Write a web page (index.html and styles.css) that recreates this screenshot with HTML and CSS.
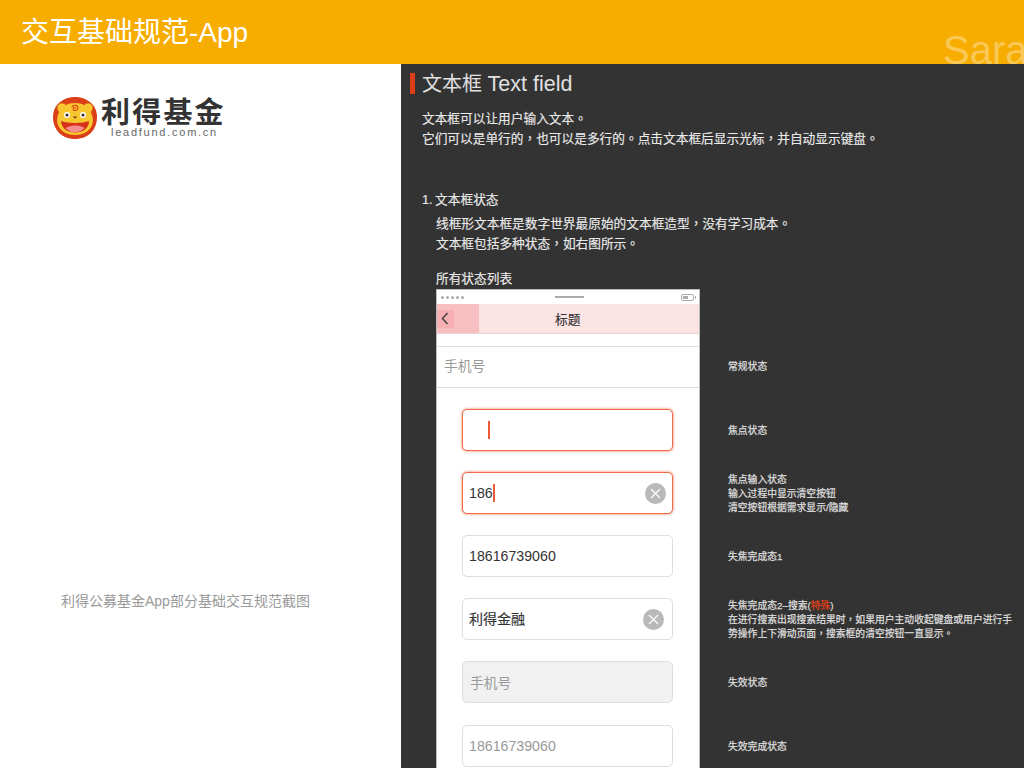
FILE: index.html
```html
<!DOCTYPE html>
<html lang="zh-CN">
<head>
<meta charset="utf-8">
<title>交互基础规范-App</title>
<link rel="stylesheet" href="styles.css">
</head>
<body>
<div class="page">
  <header class="topbar">
    <h1 class="topbar-title">交互基础规范-App</h1>
    <span class="watermark">Sara</span>
  </header>
  <div class="main">
    <aside class="side">
      <div class="logo">
        <svg class="logo-mark" width="44" height="42" viewBox="0 0 44 42">
          <path d="M22 0C33 0 44 7 44 20C44 33 35 42 22 42C9 42 0 33 0 20C0 7 11 0 22 0Z" fill="#DC3F17"/>
          <circle cx="9" cy="11" r="5" fill="#F8C62E" stroke="#C9541A" stroke-width=".8"/>
          <circle cx="35" cy="11" r="5" fill="#F8C62E" stroke="#C9541A" stroke-width=".8"/>
          <path d="M22 6C32 6 39 12 40 23C40 32 32 38 22 38C12 38 4 32 4 23C5 12 12 6 22 6Z" fill="#F8C62E"/>
          <path d="M19 10.500a3 2.600 0 1 1 3 3a1.600 1.500 0 1 1 1-2.500" fill="none" stroke="#DC3F17" stroke-width="1.100"/>
          <circle cx="14" cy="18" r="3" fill="#fff"/>
          <circle cx="30" cy="18" r="3" fill="#fff"/>
          <circle cx="14" cy="18" r="1.500" fill="#3A2A20"/>
          <circle cx="30" cy="18" r="1.500" fill="#3A2A20"/>
          <path d="M20 19.500h4l-2 2.300z" fill="#5A3418"/>
          <path d="M8 24C14 26.500 30 26.500 36 24C36 31 30 35.500 22 35.500C14 35.500 8.500 31 8 24Z" fill="#D8321C"/>
          <path d="M12.500 31C17 27.500 27 27.500 31.500 31C28.500 34.300 25 35.300 22 35.300C18.500 35.300 15.500 34.300 12.500 31Z" fill="#F58E8E"/>
        </svg>
        <div class="logo-text">
          <div class="logo-name">利得基金</div>
          <div class="logo-url">leadfund.com.cn</div>
        </div>
      </div>
      <p class="caption">利得公募基金App部分基础交互规范截图</p>
    </aside>
    <section class="content">
      <h2 class="section-title">文本框 <span class="title-latin">Text field</span></h2>
      <div class="intro">
        <p>文本框可以让用户输入文本<span class="pn" lang="zh-TW">。</span></p>
        <p>它们可以是单行的<span class="pn" lang="zh-TW">，</span>也可以是多行的<span class="pn" lang="zh-TW">。</span>点击文本框后显示光标<span class="pn" lang="zh-TW">，</span>并自动显示键盘<span class="pn" lang="zh-TW">。</span></p>
      </div>
      <h3 class="sub-title">1. 文本框状态</h3>
      <div class="sub-body">
        <p>线框形文本框是数字世界最原始的文本框造型<span class="pn" lang="zh-TW">，</span>没有学习成本<span class="pn" lang="zh-TW">。</span></p>
        <p>文本框包括多种状态<span class="pn" lang="zh-TW">，</span>如右图所示<span class="pn" lang="zh-TW">。</span></p>
      </div>
      <p class="list-label">所有状态列表</p>
      <div class="phone-head">
        <div class="status-bar">
          <span class="signal"><i></i><i></i><i></i><i></i><i></i></span>
          <span class="speaker"></span>
          <span class="battery"><i></i></span>
        </div>
        <div class="nav">
          <span class="back">
            <span class="back-icon">
              <svg width="8" height="13" viewBox="0 0 8 13"><path d="M6.500 1L1.500 6.500L6.500 12" fill="none" stroke="#444" stroke-width="1.500"/></svg>
            </span>
          </span>
          <span class="nav-title">标题</span>
        </div>
      </div>
      <div class="state state-first">
        <div class="cell">
          <div class="plain-field">手机号</div>
        </div>
        <div class="note">常规状态</div>
      </div>
      <div class="state">
        <div class="cell">
          <div class="field field-focus"><span class="caret caret-empty"></span></div>
        </div>
        <div class="note">焦点状态</div>
      </div>
      <div class="state">
        <div class="cell">
          <div class="field field-focus field-num">186<span class="caret"></span>
            <span class="clear clear-a"><svg width="11" height="11" viewBox="0 0 11 11"><path d="M1 1L10 10M10 1L1 10" stroke="#fff" stroke-width="1.200"/></svg></span>
          </div>
        </div>
        <div class="note">焦点输入状态<br>输入过程中显示清空按钮<br>清空按钮根据需求显示/隐藏</div>
      </div>
      <div class="state">
        <div class="cell">
          <div class="field field-num">18616739060</div>
        </div>
        <div class="note">失焦完成态1</div>
      </div>
      <div class="state">
        <div class="cell">
          <div class="field field-cjk">利得金融
            <span class="clear"><svg width="11" height="11" viewBox="0 0 11 11"><path d="M1 1L10 10M10 1L1 10" stroke="#fff" stroke-width="1.200"/></svg></span>
          </div>
        </div>
        <div class="note">失焦完成态2–搜索(<span class="special">特殊</span>)<br>在进行搜索出现搜索结果时<span class="pn" lang="zh-TW">，</span>如果用户主动收起键盘或用户进行手<br>势操作上下滑动页面<span class="pn" lang="zh-TW">，</span>搜索框的清空按钮一直显示<span class="pn" lang="zh-TW">。</span></div>
      </div>
      <div class="state state-tall">
        <div class="cell">
          <div class="field field-disabled">手机号</div>
        </div>
        <div class="note">失效状态</div>
      </div>
      <div class="state">
        <div class="cell">
          <div class="field field-num field-muted">18616739060</div>
        </div>
        <div class="note">失效完成状态</div>
      </div>
    </section>
  </div>
</div>
</body>
</html>
```
FILE: styles.css
```css
* { box-sizing: border-box; }
html, body { margin: 0; padding: 0; }
body {
  font-family: "Liberation Sans", "Noto Sans CJK SC", sans-serif;
  background: #fff;
}
h1, h2, h3, p { margin: 0; font-weight: 400; }
.page {
  width: 1024px;
  height: 768px;
  overflow: hidden;
}
.topbar {
  position: relative;
  height: 64px;
  background: #F7AD00;
  overflow: hidden;
  display: flex;
  align-items: center;
  padding: 1px 0 0 21px;
}
.topbar-title {
  font-size: 28px;
  color: #fff;
  line-height: 34px;
}
.watermark {
  position: absolute;
  left: 943px;
  top: 26px;
  font-size: 40px;
  line-height: 48px;
  color: #F9C857;
  white-space: nowrap;
}
.main {
  display: flex;
  height: 704px;
}
.side {
  width: 401px;
  flex: none;
  background: #fff;
  padding: 33px 0 0 53px;
}
.logo {
  display: flex;
  align-items: flex-start;
  gap: 4px;
  height: 42px;
}
.logo-name {
  font-size: 29px;
  line-height: 26px;
  letter-spacing: 2.200px;
  font-weight: 700;
  color: #333;
  margin-top: 3px;
}
.logo-url {
  font-size: 11px;
  line-height: 12px;
  letter-spacing: 1.750px;
  color: #666;
  padding-left: 10px;
}
.caption {
  margin: 453px 0 0 8px;
  font-size: 14px;
  line-height: 18px;
  color: #999;
  white-space: nowrap;
}
.content {
  flex: 1;
  background: #333;
  color: #EAEAEA;
  padding: 9px 0 0 9px;
  overflow: hidden;
}
.section-title {
  border-left: 5px solid #DC3F17;
  padding-left: 7px;
  font-size: 20px;
  line-height: 23px;
  height: 21px;
  color: #E0E0E0;
}
.title-latin { font-size: 21.500px; }
.intro {
  margin: 15px 0 0 12px;
  font-size: 12.700px;
  line-height: 20px;
  white-space: nowrap;
  -webkit-text-stroke: .15px #EAEAEA;
}
.intro p, .sub-body p { height: 20px; }
.pn {
  font-family: "Noto Sans CJK TC", sans-serif;
  line-height: 0;
}
.sub-title {
  margin: 41px 0 0 12px;
  font-size: 12.700px;
  line-height: 20px;
  height: 20px;
  word-spacing: -1px;
  -webkit-text-stroke: .15px #EAEAEA;
}
.sub-body {
  margin: 4px 0 0 26px;
  font-size: 12.700px;
  line-height: 20px;
  -webkit-text-stroke: .15px #EAEAEA;
}
.list-label {
  margin: 15px 0 0 26px;
  font-size: 12.700px;
  line-height: 20px;
  height: 20px;
  -webkit-text-stroke: .15px #EAEAEA;
}
.phone-head {
  width: 264px;
  margin: 0 0 0 26px;
  background: #fff;
  border: 1px solid #bbb;
  border-bottom: 0;
}
.status-bar {
  height: 14px;
  display: flex;
  align-items: center;
  justify-content: space-between;
  padding: 0 5px 0 4px;
}
.signal { display: flex; gap: 2px; }
.signal i {
  width: 3px;
  height: 3px;
  border-radius: 50%;
  background: #aaa;
}
.speaker {
  width: 29px;
  height: 2px;
  background: #aaa;
  margin-right: 6px;
}
.battery {
  position: relative;
  width: 13px;
  height: 7px;
  border: 1px solid #aaa;
  border-radius: 2px;
  padding: 1px;
  display: flex;
}
.battery::after {
  content: "";
  position: absolute;
  right: -3px;
  top: 1px;
  width: 1px;
  height: 3px;
  background: #aaa;
}
.battery i {
  width: 5px;
  background: #aaa;
}
.nav {
  height: 30px;
  background: #FCE4E5;
  border-bottom: 1px solid #E9D4D5;
  display: flex;
  align-items: center;
}
.back {
  width: 42px;
  height: 100%;
  background: #F8BFC1;
  flex: none;
  display: flex;
  align-items: center;
}
.back-icon {
  width: 17px;
  height: 18px;
  background: #F6B0B3;
  display: flex;
  align-items: center;
  padding-left: 4px;
}
.nav-title {
  font-size: 12.700px;
  color: #333;
  margin-left: 76px;
  -webkit-text-stroke: .15px #333;
}
.state {
  display: flex;
  align-items: center;
  height: 63px;
  margin-left: 26px;
}
.state-first { height: 64px; }
.state-tall { height: 64px; }
.cell {
  width: 264px;
  height: 100%;
  flex: none;
  background: #fff;
  border-left: 1px solid #bbb;
  border-right: 1px solid #bbb;
  display: flex;
  align-items: center;
  justify-content: center;
  padding-right: 1px;
}
.state-first .cell {
  align-items: flex-start;
  padding: 12px 0 0;
}
.plain-field {
  width: 100%;
  height: 42px;
  border-top: 1px solid #ddd;
  border-bottom: 1px solid #ddd;
  font-size: 13.800px;
  line-height: 40px;
  padding-left: 7px;
  color: #999;
}
.field {
  position: relative;
  width: 211px;
  height: 42px;
  border: 1px solid #DEDEDE;
  border-radius: 5px;
  padding-left: 6px;
  display: flex;
  align-items: center;
  color: #333;
  background: #fff;
}
.field-focus {
  border-color: #EF6B4A;
  box-shadow: 0 0 2px 1px rgba(239, 107, 74, .45);
}
.field-num { font-size: 14.200px; }
.field-cjk {
  font-size: 14px;
  padding-bottom: 2px;
  -webkit-text-stroke: .15px #333;
}
.field-disabled {
  background: #F1F1F1;
  color: #999;
  font-size: 13.800px;
  padding-left: 7px;
}
.field-muted { color: #999; }
.caret {
  display: block;
  width: 2px;
  height: 18px;
  background: #EA5A34;
}
.caret-empty { margin-left: 19px; }
.clear {
  position: absolute;
  right: 8px;
  top: 10px;
  width: 21px;
  height: 21px;
  border-radius: 50%;
  background: #B9B9B9;
  display: flex;
  align-items: center;
  justify-content: center;
}
.clear-a { right: 6px; }
.note {
  margin: 2px 0 0 28px;
  font-size: 9.800px;
  line-height: 14px;
  color: #DDD;
  -webkit-text-stroke: .25px #DDD;
  white-space: nowrap;
}
.special { color: #DC3F17; -webkit-text-stroke: .25px #DC3F17; }
```
